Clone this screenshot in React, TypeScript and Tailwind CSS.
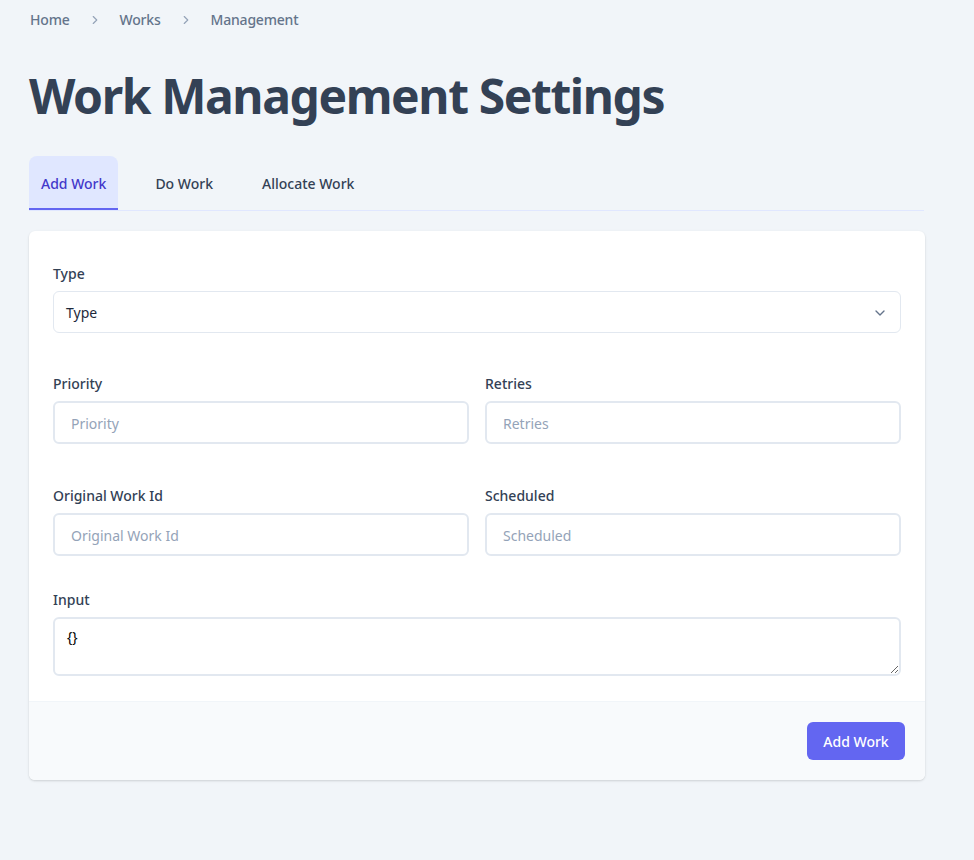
import React from "react";
import { ChevronRight, ChevronDown } from "lucide-react";

const font = { fontFamily: '"Noto Sans", "Open Sans", sans-serif' };

function Field({ label, placeholder }: { label: string; placeholder: string }) {
  return (
    <div className="flex flex-col">
      <label className="text-sm font-medium text-[#334155] leading-5 mb-[7px]">{label}</label>
      <input
        placeholder={placeholder}
        className="h-[43px] w-full rounded-md border-2 border-[#e2e8f0] bg-white px-4 pt-px text-sm text-[#334155] placeholder:text-[#94a3b8] outline-none"
      />
    </div>
  );
}

export default function App() {
  return (
    <div className="min-h-[860px] w-full bg-[#f1f5f9] px-[29px]" style={font}>
      <nav className="flex items-center h-10 pl-px text-sm font-medium text-[#64748b] tracking-[-0.2px]">
        <span>Home</span>
        <ChevronRight size={14} strokeWidth={2} className="mx-[18px] text-[#94a3b8]" />
        <span>Works</span>
        <ChevronRight size={14} strokeWidth={2} className="mx-[18px] text-[#94a3b8]" />
        <span>Management</span>
      </nav>
      <h1 className="mt-[26px] text-[48px] leading-[60px] font-bold text-[#334155] tracking-[-1.4px]">
        Work Management Settings
      </h1>
      <div className="mt-[30px] w-[895px] flex border-b border-[#e0e7ff] text-sm font-medium">
        <div className="h-[54px] px-[12px] pt-[4px] flex items-center rounded-t-lg bg-[#e0e7ff] text-[#4338ca] border-b-2 border-[#6366f1] -mb-px">
          Add Work
        </div>
        <div className="h-[54px] px-[37px] pt-[2px] flex items-center text-[#334155]">Do Work</div>
        <div className="h-[54px] px-[12px] pt-[2px] flex items-center text-[#334155]">Allocate Work</div>
      </div>
      <div className="mt-5 w-[896px] rounded-md bg-white shadow-[0_1px_3px_rgba(0,0,0,0.1),0_1px_2px_rgba(0,0,0,0.06)] overflow-hidden">
        <div className="px-6 pt-[33px] pb-[25px]">
          <div className="flex flex-col">
            <label className="text-sm font-medium text-[#334155] leading-5 mb-[7px]">Type</label>
            <div className="relative h-[42px] rounded-md border border-[#e2e8f0] bg-white flex items-center px-[12px] pt-px text-sm text-[#1e293b]">
              Type
              <ChevronDown size={16} strokeWidth={2} className="absolute right-[12px] text-[#64748b]" />
            </div>
          </div>
          <div className="mt-[41px] grid grid-cols-2 gap-4">
            <Field label="Priority" placeholder="Priority" />
            <Field label="Retries" placeholder="Retries" />
          </div>
          <div className="mt-[42px] grid grid-cols-2 gap-4">
            <Field label="Original Work Id" placeholder="Original Work Id" />
            <Field label="Scheduled" placeholder="Scheduled" />
          </div>
          <div className="mt-[34px] flex flex-col">
            <label className="text-sm font-medium text-[#334155] leading-5 mb-[7px]">Input</label>
            <textarea
              defaultValue="{}"
              className="h-[59px] w-full rounded-md border-2 border-[#e2e8f0] bg-white px-3 py-2 text-sm text-black outline-none"
            />
          </div>
        </div>
        <div className="border-t border-[#f1f5f9] bg-[#f8fafc] px-5 py-5 flex justify-end">
          <button className="h-[38px] w-[98px] rounded-md bg-[#6366f1] pt-px text-white text-sm font-medium">Add Work</button>
        </div>
      </div>
    </div>
  );
}
